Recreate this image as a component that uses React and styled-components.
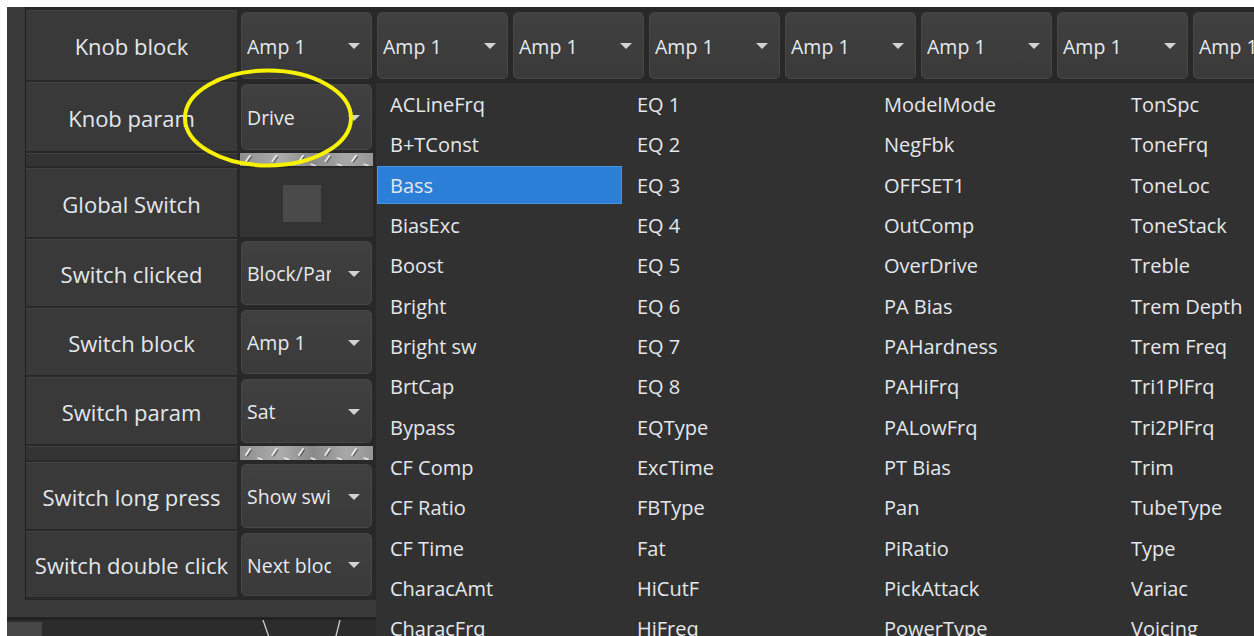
import React from "react";
import styled, { createGlobalStyle, css } from "styled-components";

const GlobalStyle = createGlobalStyle`
  html, body {
    margin: 0;
    padding: 0;
    background: #ffffff;
    overflow: hidden;
  }
  body {
    font-family: "Open Sans", "Noto Sans", "Liberation Sans", sans-serif;
  }
`;

const Page = styled.div`
  box-sizing: border-box;
  width: 1254px;
  height: 636px;
  padding: 7px 0 0 7px;
`;

const Window = styled.div`
  position: relative;
  width: 1247px;
  height: 629px;
  overflow: hidden;
  background: #2a2a2a;
  display: flex;
  flex-direction: column;
`;

const Frame = styled.div`
  background: #3a3a3a;
  padding: 0 0 17px 18px;
`;

const Table = styled.div`
  display: flex;
  flex-direction: column;
  gap: 2px;
  padding: 3px 0;
  background: #282828;
  border-left: 1px solid #1f1f1f;
`;

const Row = styled.div`
  display: grid;
  grid-template-columns: 211px repeat(8, 133px);
  column-gap: 3px;
  height: ${(p) => p.$h}px;
`;

const Label = styled.div`
  display: flex;
  align-items: center;
  justify-content: center;
  padding-top: 3px;
  white-space: nowrap;
  font-size: 22px;
  color: #e3e7ec;
  background: ${(p) => (p.$spacer ? "#333333" : "#393939")};
  box-shadow: inset 0 1px 0 #434343;
`;

const Cell = styled.div`
  display: flex;
  padding: 2px 1px 1px 1px;
  min-width: 0;
`;

const SwitchCell = styled.div`
  display: flex;
  align-items: center;
  justify-content: center;
  padding: 2px 9px 0 0;
  background: #333333;
`;

const SwitchBox = styled.div`
  width: 38px;
  height: 37px;
  background: #4a4a4a;
`;

const Select = styled.div`
  flex: 1;
  min-width: 0;
  display: flex;
  align-items: center;
  border: 1px solid #474747;
  border-radius: 5px;
  background: linear-gradient(#404040, #3a3a3a);
  padding: 2px 0 0 5px;
`;

const SelectText = styled.span`
  flex: 1;
  min-width: 0;
  overflow: hidden;
  white-space: nowrap;
  font-size: 19.5px;
  color: #e6e9ed;
`;

const Caret = styled.span`
  width: 0;
  height: 0;
  margin: 0 11px 0 17px;
  border-left: 6.5px solid transparent;
  border-right: 6.5px solid transparent;
  border-top: 6px solid #d2d2d2;
`;

const PlateStrip = styled.svg`
  display: block;
  width: 133px;
  height: 100%;
`;

const Footer = styled.div`
  flex: 1;
  display: flex;
  align-items: stretch;
  border-top: 3px solid #222222;
  background: #2c2c2c;
`;

const FooterTab = styled.div`
  width: 35px;
  margin-top: 2px;
  background: #474747;
`;

const Wires = styled.svg`
  margin-left: 213px;
  width: 95px;
  height: 20px;
`;

const Menu = styled.div`
  position: absolute;
  left: 369px;
  top: 76px;
  width: 990px;
  height: 600px;
  padding-top: 1px;
  background: #313131;
  display: grid;
  grid-auto-flow: column;
  grid-template-rows: repeat(14, 40.33px);
  grid-template-columns: repeat(4, 247px);
  z-index: 2;
`;

const MenuItem = styled.div`
  display: flex;
  align-items: center;
  margin: 1px;
  padding: 1px 0 0 13px;
  white-space: nowrap;
  font-size: 20px;
  color: #e4e7eb;
  ${(p) =>
    p.$active &&
    css`
      background: #2b7fd6;
      box-shadow: inset 0 0 0 1px #4a93df;
    `}
`;

const Annotation = styled.svg`
  position: absolute;
  left: 176px;
  top: 61px;
  width: 170px;
  height: 100px;
  z-index: 3;
  pointer-events: none;
`;

const params = [
  "ACLineFrq", "B+TConst", "Bass", "BiasExc", "Boost", "Bright", "Bright sw",
  "BrtCap", "Bypass", "CF Comp", "CF Ratio", "CF Time", "CharacAmt", "CharacFrq",
  "EQ 1", "EQ 2", "EQ 3", "EQ 4", "EQ 5", "EQ 6", "EQ 7",
  "EQ 8", "EQType", "ExcTime", "FBType", "Fat", "HiCutF", "HiFreq",
  "ModelMode", "NegFbk", "OFFSET1", "OutComp", "OverDrive", "PA Bias", "PAHardness",
  "PAHiFrq", "PALowFrq", "PT Bias", "Pan", "PiRatio", "PickAttack", "PowerType",
  "TonSpc", "ToneFrq", "ToneLoc", "ToneStack", "Treble", "Trem Depth", "Trem Freq",
  "Tri1PlFrq", "Tri2PlFrq", "Trim", "TubeType", "Type", "Variac", "Voicing",
];

function Dropdown({ value }) {
  return (
    <Cell>
      <Select>
        <SelectText>{value}</SelectText>
        <Caret />
      </Select>
    </Cell>
  );
}

function DiamondPlate() {
  return (
    <PlateStrip viewBox="0 0 133 14" preserveAspectRatio="none">
      <defs>
        <linearGradient id="plateShade" x1="0" y1="0" x2="1" y2="0">
          <stop offset="0" stopColor="#8e8e8e" />
          <stop offset="0.3" stopColor="#acacac" />
          <stop offset="0.55" stopColor="#8a8a8a" />
          <stop offset="0.8" stopColor="#a8a8a8" />
          <stop offset="1" stopColor="#959595" />
        </linearGradient>
        <pattern id="plateTread" width="26.5" height="14" patternUnits="userSpaceOnUse">
          <line x1="6" y1="9" x2="10" y2="3" stroke="#f6f6f6" strokeWidth="1.8" strokeLinecap="round" />
          <line x1="7.2" y1="10" x2="11.2" y2="4" stroke="#3a3a3a" strokeWidth="1" strokeLinecap="round" />
          <line x1="18" y1="12" x2="22" y2="13.5" stroke="#f0f0f0" strokeWidth="1.4" strokeLinecap="round" />
        </pattern>
      </defs>
      <rect width="133" height="14" fill="url(#plateShade)" />
      <rect width="133" height="14" fill="url(#plateTread)" />
    </PlateStrip>
  );
}

const rows = [
  { label: "Knob block", h: 69.5, kind: "top" },
  { label: "Knob param", h: 69, kind: "select", value: "Drive" },
  { h: 13, kind: "spacer" },
  { label: "Global Switch", h: 69, kind: "switch" },
  { label: "Switch clicked", h: 67, kind: "select", value: "Block/Param" },
  { label: "Switch block", h: 67, kind: "select", value: "Amp 1" },
  { label: "Switch param", h: 67, kind: "select", value: "Sat" },
  { h: 14, kind: "spacer" },
  { label: "Switch long press", h: 67, kind: "select", value: "Show switches" },
  { label: "Switch double click", h: 66, kind: "select", value: "Next block" },
];

export default function App() {
  return (
    <Page>
      <GlobalStyle />
      <Window>
        <Frame>
          <Table>
            {rows.map((r, i) => (
              <Row key={i} $h={r.h}>
                <Label $spacer={r.kind === "spacer"}>{r.label}</Label>
                {r.kind === "top" &&
                  Array.from({ length: 8 }, (_, k) => <Dropdown key={k} value="Amp 1" />)}
                {r.kind === "select" && <Dropdown value={r.value} />}
                {r.kind === "switch" && (
                  <SwitchCell>
                    <SwitchBox />
                  </SwitchCell>
                )}
                {r.kind === "spacer" && <DiamondPlate />}
              </Row>
            ))}
          </Table>
        </Frame>
        <Footer>
          <FooterTab />
          <Wires viewBox="0 0 95 20">
            <line x1="8" y1="0" x2="15" y2="20" stroke="#cfcfcf" strokeWidth="1.3" />
            <line x1="85" y1="0" x2="80" y2="20" stroke="#cfcfcf" strokeWidth="1.3" />
          </Wires>
        </Footer>

        <Menu>
          {params.map((p) => (
            <MenuItem key={p} $active={p === "Bass"}>
              {p}
            </MenuItem>
          ))}
        </Menu>

        <Annotation viewBox="0 0 170 100">
          <ellipse cx="85" cy="50" rx="83" ry="47.5" fill="none" stroke="#f7f200" strokeWidth="4" />
        </Annotation>
      </Window>
    </Page>
  );
}
